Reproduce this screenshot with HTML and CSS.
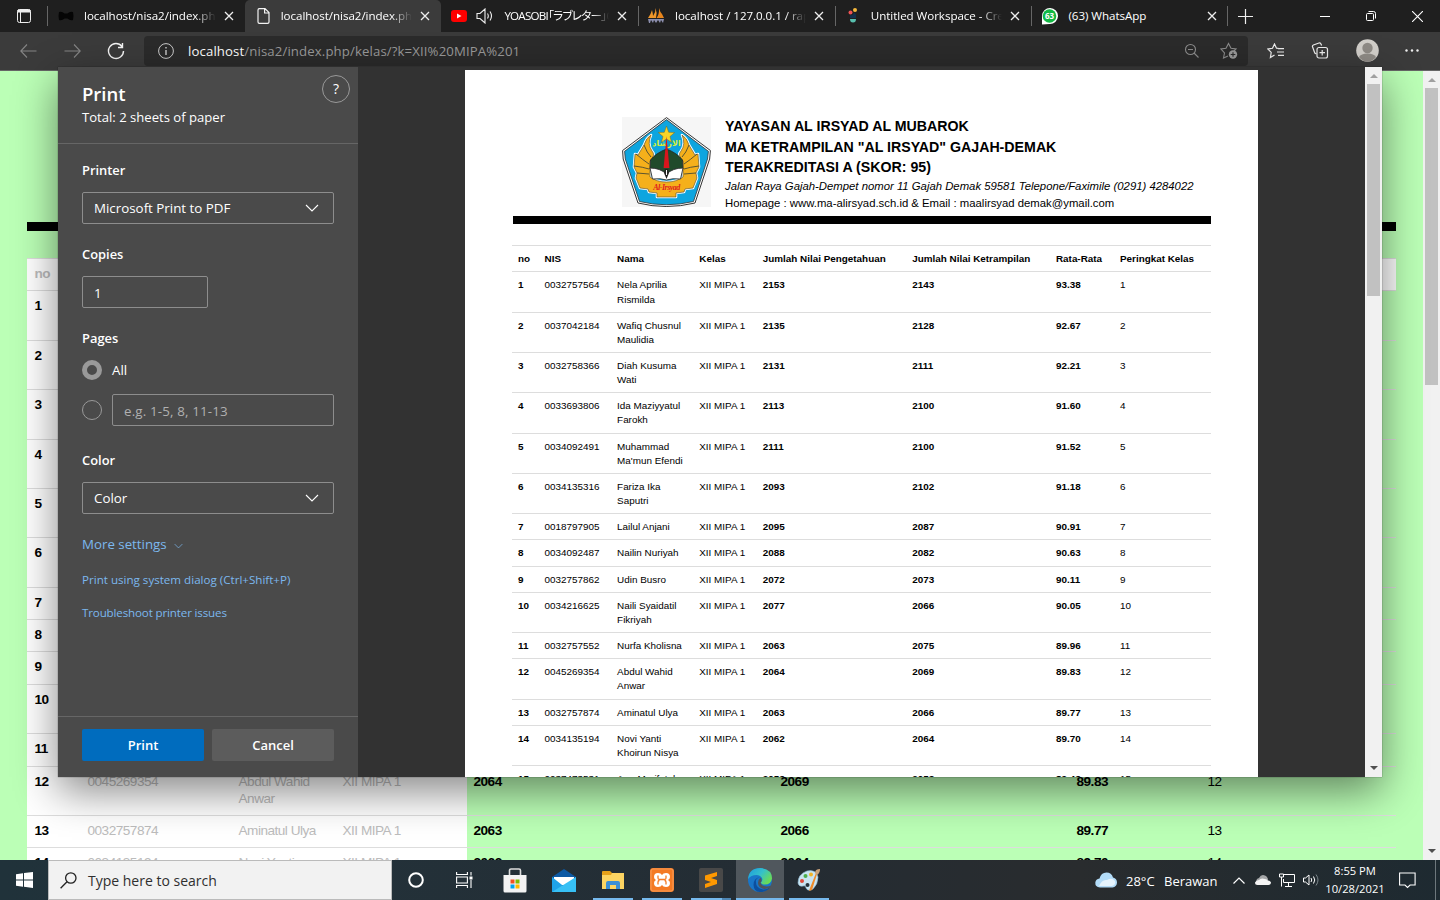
FILE: index.html
```html
<!DOCTYPE html>
<html lang="en">
<head>
<meta charset="utf-8">
<title>localhost/nisa2/index.php/kelas</title>
<link rel="stylesheet" href="styles.css">
</head>
<body>
<svg class="defs" width="0" height="0">
  <symbol id="x" viewBox="0 0 10 10"><path d="M1 1l8 8M9 1l-8 8" fill="none" stroke="#eee" stroke-width="1.3"/></symbol>
  <symbol id="chev" viewBox="0 0 14 8"><path d="M1 1l6 6 6-6" fill="none" stroke="currentColor" stroke-width="1.1"/></symbol>
  <symbol id="up" viewBox="0 0 8 4"><path d="M0 4l4-4 4 4z" fill="currentColor"/></symbol>
  <symbol id="down" viewBox="0 0 8 4"><path d="M0 0l4 4 4-4z" fill="currentColor"/></symbol>
</svg>

<header class="tabs">
  <div class="tab-menu"><svg width="16" height="16" viewBox="0 0 16 16" fill="none" stroke="#eee"><rect x="1.5" y="1.5" width="13" height="13" rx="2"/><path d="M2 2h12v2H2z" fill="#eee"/><path d="M4.5 4v10"/></svg></div>
  <div class="tab">
    <svg width="16" height="16" viewBox="0 0 16 16"><path d="M1 4q3-1 5.500 1.500h3Q12 3 15 4q1 4 0 8-3 1-5.500-1.500h-3Q4 13 1 12q-1-4 0-8z" fill="#050505"/></svg>
    <span class="label">localhost/nisa2/index.php</span><svg class="x"><use href="#x"/></svg>
  </div>
  <div class="tab active">
    <svg width="16" height="16" viewBox="0 0 16 16" fill="none" stroke="#f2f2f2" stroke-width="1.200"><path d="M3.500.6H10l4 4V14q0 1.400-1.400 1.400H4.400Q3 15.400 3 14V2Q3 .6 4.400.6M9.600.6V5H14"/></svg>
    <span class="label">localhost/nisa2/index.php</span><svg class="x"><use href="#x"/></svg>
  </div>
  <div class="tab">
    <svg width="16" height="16" viewBox="0 0 16 16"><rect y="2" width="16" height="12" rx="3" fill="#f00"/><path d="M6 5.500v5L10.500 8z" fill="#fff"/></svg>
    <svg class="speaker" width="18" height="16" viewBox="0 0 18 16" fill="none" stroke="#eee" stroke-width="1.100"><path d="M1 5.500h3L9 1v14l-5-4.500H1zM11.500 5.500q1.600 2.500 0 5M14 3.500q3 4.500 0 9"/></svg>
    <span class="label jp">YOASOBI「ラブレター」Off</span><svg class="x"><use href="#x"/></svg>
  </div>
  <div class="tab sep">
    <svg width="17" height="16" viewBox="0 0 17 16"><path d="M7.500 0q2 5 .5 10H0Q3 6 4 2q1 4 1 6Q8 4 7.500 0z" fill="#f0972a"/><path d="M11 0q1 4 3 6 1 2 2 4H8.500q3-4 2.500-10z" fill="#e8851c"/><path d="M0 11h16l-1 4-2-3-1 3-2-3-2 3-2-3-1 3-2-3-1 3H1z" fill="#8c8fae"/></svg>
    <span class="label">localhost / 127.0.0.1 / rapor</span><svg class="x"><use href="#x"/></svg>
  </div>
  <div class="tab sep">
    <svg width="16" height="16" viewBox="0 0 16 16"><circle cx="10" cy="2" r="2" fill="#f6b93b"/><circle cx="5.500" cy="4.500" r="2" fill="#ee5253"/><path d="M5 7q3 1 4-2 2 0 2 3v2H5z" fill="#12304e"/><path d="M5 11h6q0 3.500-3 3.500T5 11z" fill="#58bfae"/></svg>
    <span class="label">Untitled Workspace - Create</span><svg class="x"><use href="#x"/></svg>
  </div>
  <div class="tab sep last">
    <svg width="17" height="17" viewBox="0 0 17 17"><path d="M1 16.500V8a8 8 0 1 1 7.500 8z" fill="#fff"/><circle cx="8.500" cy="8" r="6.800" fill="#12b944"/><text x="8.500" y="11.200" class="badge-63">63</text></svg>
    <span class="label">(63) WhatsApp</span><svg class="x"><use href="#x"/></svg>
  </div>
  <svg class="plus" width="15" height="15" viewBox="0 0 15 15"><path d="M7.500 0v15M0 7.500h15" stroke="#eee" stroke-width="1.200"/></svg>
  <div class="window-buttons">
    <svg width="10" height="10" viewBox="0 0 10 10"><path d="M0 5.500h10" stroke="#fff"/></svg>
    <svg width="10" height="10" viewBox="0 0 10 10" fill="none" stroke="#fff"><rect x=".5" y="2.500" width="7" height="7" rx="1"/><path d="M2.500.5h5q2 0 2 2v5"/></svg>
    <svg width="11" height="11" viewBox="0 0 10 10"><path d="M0 0l10 10M10 0L0 10" stroke="#fff"/></svg>
  </div>
</header>

<nav class="toolbar">
  <svg class="nav-back" width="17" height="14" viewBox="0 0 17 14" fill="none" stroke="#858585" stroke-width="1.100"><path d="M7 .5L.8 7 7 13.500M1 7h15.500"/></svg>
  <svg class="nav-fwd" width="17" height="14" viewBox="0 0 17 14" fill="none" stroke="#858585" stroke-width="1.100"><path d="M10 .5L16.200 7 10 13.500M16 7H.5"/></svg>
  <svg class="nav-reload" width="18" height="18" viewBox="0 0 18 18" fill="none" stroke="#f4f4f4" stroke-width="1.400"><path d="M15 4.500A7.500 7.500 0 1 0 16.500 9M15.500 1v4.500H11"/></svg>
  <div class="address">
    <svg width="16" height="16" viewBox="0 0 16 16" fill="none" stroke="#ccc"><circle cx="8" cy="8" r="7.400"/><path d="M8 7v5M8 4v1.500" stroke-width="1.400"/></svg>
    <span class="url"><b>localhost</b>/nisa2/index.php/kelas/?k=XII%20MIPA%201</span>
    <svg width="16" height="16" viewBox="0 0 16 16" fill="none" stroke="#8c8c8c" stroke-width="1.100"><circle cx="6.500" cy="6.500" r="5"/><path d="M10 10l4.500 4.500M4 6.500h5"/></svg>
    <svg width="18" height="17" viewBox="0 0 18 17" fill="none" stroke="#8c8c8c" stroke-width="1.100"><path d="M8 14l-4.500 2 1-5L1 7l5-.7L8.500 1.500 11 6.300l5 .7-2 2"/><circle cx="13" cy="12.500" r="4.200" fill="#9a9a9a" stroke="none"/><path d="M13 10.200v4.600M10.700 12.500h4.600" stroke="#2b2b2b"/></svg>
  </div>
  <div class="tools">
    <svg width="18" height="16" viewBox="0 0 18 16" fill="none" stroke="#eee" stroke-width="1.200"><path d="M12 5.500L9.500 5.200 7.500 1 5.500 5.300.8 6l3.400 3.400-.8 5.200L7.500 12M11 5.700h6M10 9h7M11 12.300h6"/></svg>
    <svg width="18" height="17" viewBox="0 0 18 17" fill="none" stroke="#eee" stroke-width="1.200"><rect x="6" y="5.500" width="10.500" height="10.500" rx="2"/><path d="M11.200 8v5.500M8.500 10.700H14M5.500 12L3.800 11 1.600 5Q1 3.600 2.400 3l5.600-2q1.500-.5 2 1l.6 1.500"/></svg>
    <svg width="23" height="23" viewBox="0 0 23 23"><circle cx="11.500" cy="11.500" r="11.300" fill="#d2cfca"/><circle cx="11.500" cy="9" r="5.200" fill="#8f8b86"/><path d="M3 18q2-3.500 8.500-3.500T20 18q-3.500 4.800-8.500 4.800T3 18z" fill="#8f8b86"/></svg>
    <svg width="14" height="3" viewBox="0 0 14 3" fill="#eee"><circle cx="1.500" cy="1.500" r="1.200"/><circle cx="7" cy="1.500" r="1.200"/><circle cx="12.500" cy="1.500" r="1.200"/></svg>
  </div>
</nav>

<main class="page">
  <div class="content">
    <div class="rule"></div>
    <div class="rank">
      <div class="r head"><b>no</b></div>
      <div class="r h50"><b>1</b></div>
      <div class="r h49"><b>2</b></div>
      <div class="r h50"><b>3</b></div>
      <div class="r h49"><b>4</b></div>
      <div class="r h49"><b>5</b></div>
      <div class="r h50"><b>6</b></div>
      <div class="r"><b>7</b></div>
      <div class="r"><b>8</b></div>
      <div class="r h33"><b>9</b></div>
      <div class="r h49"><b>10</b></div>
      <div class="r h33"><b>11</b></div>
      <div class="r h49"><b>12</b><i>0045269354</i><i>Abdul Wahid<br>Anwar</i><i>XII MIPA 1</i><b>2064</b><b>2069</b><b>89.83</b><span>12</span></div>
      <div class="r"><b>13</b><i>0032757874</i><i>Aminatul Ulya</i><i>XII MIPA 1</i><b>2063</b><b>2066</b><b>89.77</b><span>13</span></div>
      <div class="r h49"><b>14</b><i>0034135194</i><i>Novi Yanti</i><i>XII MIPA 1</i><b>2062</b><b>2064</b><b>89.70</b><span>14</span></div>
    </div>
  </div>
  <div class="scroll page-scroll"><svg class="a light"><use href="#up"/></svg><div class="thumb"></div><svg class="a"><use href="#down"/></svg></div>
</main>

<section class="dialog">
  <aside class="settings">
    <div class="title">
      <div><h1>Print</h1><p>Total: 2 sheets of paper</p></div>
      <div class="help">?</div>
    </div>
    <div class="form">
      <h2>Printer</h2>
      <div class="field select"><span>Microsoft Print to PDF</span><svg width="14" height="8"><use href="#chev"/></svg></div>
      <h2 class="mt">Copies</h2>
      <div class="field copies"><span>1</span></div>
      <h2 class="mt">Pages</h2>
      <div class="radio-row"><div class="radio on"></div><span>All</span></div>
      <div class="radio-row range"><div class="radio"></div><div class="field hint"><span>e.g. 1-5, 8, 11-13</span></div></div>
      <h2 class="mt color-title">Color</h2>
      <div class="field select"><span>Color</span><svg width="14" height="8"><use href="#chev"/></svg></div>
      <div class="more"><span>More settings</span><svg width="9" height="6" viewBox="0 0 14 8"><use href="#chev"/></svg></div>
      <div class="link">Print using system dialog (Ctrl+Shift+P)</div>
      <div class="link second">Troubleshoot printer issues</div>
    </div>
    <div class="actions"><div class="btn primary">Print</div><div class="btn">Cancel</div></div>
  </aside>
  <div class="preview">
    <article class="paper">
      <div class="letterhead">
        <svg class="crest" width="89" height="90" viewBox="0 0 89 90">
          <rect width="89" height="90" fill="#f6f6f6"/>
          <path d="M44.500.6L88.400 33.500 87.600 42 73 86Q44 93 16 86L1.200 42 .6 33.500z" fill="#fff" stroke="#333" stroke-width="1"/>
          <path d="M44.500 2.600L86.400 34.300 85.500 42 71.500 84.500Q44 91 17.500 84.500L3.300 42 2.600 34.300z" fill="#0ea5df" stroke="#333" stroke-width=".8"/>
          <path d="M29 18Q24 21 22 28l-6 10-3-1-1 13 3 6-1 5 4 10 8 1 1 3 8 1v4h19v-4l8-1 1-3 8-1 4-10-1-5 3-6-1-13-3 1-6-10q-2-7-7-10 4 9-1 16-4 4 2 10v16q-7 5-16.500 5T28 60V44q6-6 2-10-5-7-1-16z" fill="#f5b01b" stroke="#fff" stroke-width="2.600" stroke-linejoin="round"/>
          <path d="M29 18Q24 21 22 28l-6 10-3-1-1 13 3 6-1 5 4 10 8 1 1 3 8 1v4h19v-4l8-1 1-3 8-1 4-10-1-5 3-6-1-13-3 1-6-10q-2-7-7-10 4 9-1 16-4 4 2 10v16q-7 5-16.500 5T28 60V44q6-6 2-10-5-7-1-16z" fill="#f5b01b" stroke="#4b4a31" stroke-width=".6"/>
          <path d="M22 28q3 8 7 12M14 37q7 6 13 10M12 49q9 1 15 3M15 56l12 1M67 28q-3 8-7 12M75 37q-7 6-13 10M77 49q-9 1-15 3M74 56l-12 1" stroke="#4b4a31" stroke-width=".9" fill="none"/>
          <path d="M44.500 9l2.200 6.300 6 .2-4.700 4 1.700 6-5.200-3.500-5.200 3.500 1.700-6-4.700-4 6-.2z" fill="#f8d427" stroke="#7a6a20" stroke-width=".5"/>
          <text x="44.500" y="28.500" class="arabic">الارشاد</text>
          <path d="M44.500 32Q34 36 28.500 43l-.5 9q9-2 16.500 6Q52 50 61 52l-.5-9Q55 36 44.500 32z" fill="#204a2b" stroke="#222" stroke-width=".8"/>
          <path d="M28 51q10 0 16.500 6Q51 51 61 51l-2.500 11q-8-1-14 1-6-2-14-1z" fill="#fff" stroke="#333" stroke-width=".9"/>
          <path d="M44.500 19l2.900 32h-5.800z" fill="#d9161d"/>
          <path d="M43 52h3l1 4-2.500 6L42 56z" fill="#222"/><path d="M44.500 53v5" stroke="#fff"/>
          <text x="44.500" y="73" class="crest-name">Al-Irsyad</text>
        </svg>
        <div class="lines">
          <h3>YAYASAN AL IRSYAD AL MUBAROK</h3>
          <h3 class="l2">MA KETRAMPILAN "AL IRSYAD" GAJAH-DEMAK</h3>
          <h3 class="l3">TERAKREDITASI A (SKOR: 95)</h3>
          <p class="addr">Jalan Raya Gajah-Dempet nomor 11 Gajah Demak 59581 Telepone/Faximile (0291) 4284022</p>
          <p class="home">Homepage : www.ma-alirsyad.sch.id &amp; Email : maalirsyad demak@ymail.com</p>
        </div>
      </div>
      <div class="bar"></div>
      <div class="sheet">
        <div class="row th"><b>no</b><b>NIS</b><b>Nama</b><b>Kelas</b><b>Jumlah Nilai Pengetahuan</b><b>Jumlah Nilai Ketrampilan</b><b>Rata-Rata</b><b>Peringkat Kelas</b></div>
        <div class="row two"><b>1</b><span>0032757564</span><span>Nela Aprilia<br>Rismilda</span><span>XII MIPA 1</span><b>2153</b><b>2143</b><b>93.38</b><span>1</span></div>
        <div class="row two"><b>2</b><span>0037042184</span><span>Wafiq Chusnul<br>Maulidia</span><span>XII MIPA 1</span><b>2135</b><b>2128</b><b>92.67</b><span>2</span></div>
        <div class="row two"><b>3</b><span>0032758366</span><span>Diah Kusuma<br>Wati</span><span>XII MIPA 1</span><b>2131</b><b>2111</b><b>92.21</b><span>3</span></div>
        <div class="row two"><b>4</b><span>0033693806</span><span>Ida Maziyyatul<br>Farokh</span><span>XII MIPA 1</span><b>2113</b><b>2100</b><b>91.60</b><span>4</span></div>
        <div class="row two"><b>5</b><span>0034092491</span><span>Muhammad<br>Ma'mun Efendi</span><span>XII MIPA 1</span><b>2111</b><b>2100</b><b>91.52</b><span>5</span></div>
        <div class="row two"><b>6</b><span>0034135316</span><span>Fariza Ika<br>Saputri</span><span>XII MIPA 1</span><b>2093</b><b>2102</b><b>91.18</b><span>6</span></div>
        <div class="row"><b>7</b><span>0018797905</span><span>Lailul Anjani</span><span>XII MIPA 1</span><b>2095</b><b>2087</b><b>90.91</b><span>7</span></div>
        <div class="row"><b>8</b><span>0034092487</span><span>Nailin Nuriyah</span><span>XII MIPA 1</span><b>2088</b><b>2082</b><b>90.63</b><span>8</span></div>
        <div class="row"><b>9</b><span>0032757862</span><span>Udin Busro</span><span>XII MIPA 1</span><b>2072</b><b>2073</b><b>90.11</b><span>9</span></div>
        <div class="row two"><b>10</b><span>0034216625</span><span>Naili Syaidatil<br>Fikriyah</span><span>XII MIPA 1</span><b>2077</b><b>2066</b><b>90.05</b><span>10</span></div>
        <div class="row"><b>11</b><span>0032757552</span><span>Nurfa Kholisna</span><span>XII MIPA 1</span><b>2063</b><b>2075</b><b>89.96</b><span>11</span></div>
        <div class="row two"><b>12</b><span>0045269354</span><span>Abdul Wahid<br>Anwar</span><span>XII MIPA 1</span><b>2064</b><b>2069</b><b>89.83</b><span>12</span></div>
        <div class="row"><b>13</b><span>0032757874</span><span>Aminatul Ulya</span><span>XII MIPA 1</span><b>2063</b><b>2066</b><b>89.77</b><span>13</span></div>
        <div class="row two"><b>14</b><span>0034135194</span><span>Novi Yanti<br>Khoirun Nisya</span><span>XII MIPA 1</span><b>2062</b><b>2064</b><b>89.70</b><span>14</span></div>
        <div class="row"><b>15</b><span>0037473531</span><span>Ana Marifatul</span><span>XII MIPA 1</span><b>2053</b><b>2053</b><b>89.43</b><span>15</span></div>
      </div>
    </article>
  </div>
  <div class="scroll preview-scroll"><svg class="a light"><use href="#up"/></svg><div class="thumb"></div><svg class="a"><use href="#down"/></svg></div>
</section>

<footer class="taskbar">
  <div class="start"><svg width="17" height="16" viewBox="0 0 17 16" fill="#fff"><path d="M0 2.300l7-1v6.200H0zM8 1.100L17 0v7.500H8zM0 8.500h7v6.200l-7-1zM8 8.500h9V16l-9-1.200z"/></svg></div>
  <div class="search"><svg width="17" height="17" viewBox="0 0 17 17" fill="none" stroke="#222" stroke-width="1.300"><circle cx="10.800" cy="6" r="5.200"/><path d="M7 9.800L.6 16.300"/></svg><span>Type here to search</span></div>
  <div class="cell"><svg width="18" height="18" viewBox="0 0 18 18"><circle cx="9" cy="9" r="6.800" fill="none" stroke="#fff" stroke-width="2"/></svg></div>
  <div class="cell view"><svg width="17" height="16" viewBox="0 0 17 16" fill="none" stroke="#fff" stroke-width="1.100"><path d="M.6 0v2.500h10.800V0M.6 16v-2.500h10.800V16M.6 5h10.800v6H.6zM15 0v3.500M15 8v8"/><path d="M13.500 4.500h3v3h-3z" fill="#fff" stroke="none"/></svg></div>
  <div class="cell app"><svg width="24" height="25" viewBox="0 0 24 25"><path d="M6.500 8V2.500q0-1.500 1.500-1.500h8q1.500 0 1.500 1.500V8" fill="none" stroke="#ddd" stroke-width="1.600"/><path d="M.5 7h23v16q0 1.500-1.500 1.500H2Q.5 24.500.5 23z" fill="#f3f3f3"/><path d="M7.500 11.500h4v4h-4z" fill="#f25022"/><path d="M12.500 11.500h4v4h-4z" fill="#7fba00"/><path d="M7.500 16.500h4v4h-4z" fill="#00a4ef"/><path d="M12.500 16.500h4v4h-4z" fill="#ffb900"/></svg></div>
  <div class="cell app"><svg width="24" height="23" viewBox="0 0 24 23"><path d="M0 8l12-8 12 8v3H0z" fill="#0c59a4"/><path d="M2 8h20v8H2z" fill="#fff"/><path d="M0 8l12 9.500L24 8v15H0z" fill="#1fa3ea"/><path d="M0 23L24 8v15z" fill="#37c0f5"/></svg></div>
  <div class="cell app run"><svg width="22" height="19" viewBox="0 0 22 19"><path d="M0 1q0-1 1-1h7l2 2h11q1 0 1 1v15H0z" fill="#e6a11a"/><path d="M0 4h9l1-2h12v16H0z" fill="#fcd462"/><path d="M4 18v-6q0-2 2-2h10q2 0 2 2v6h-4v-4H8v4z" fill="#3a8fd6"/></svg></div>
  <div class="cell app run"><svg width="24" height="24" viewBox="0 0 24 24"><rect width="24" height="24" rx="3" fill="#f47a24"/><rect x="1" y="1" width="22" height="22" rx="2" fill="none" stroke="#f9a566" stroke-width=".8"/><path d="M8 5q3 0 4 2 1-2 4-2 4 0 4 4 0 2-2 3 2 1 2 3 0 4-4 4-3 0-4-2-1 2-4 2-4 0-4-4 0-2 2-3-2-1-2-3 0-4 4-4z" fill="#fff"/><path d="M8 7.500v2.500q0 1.500 1.500 1.500h5q1.500 0 1.500-1.500V7.500M8 16.500V14q0-1.500 1.500-1.500M16 16.500V14q0-1.500-1.500-1.500" fill="none" stroke="#f47a24" stroke-width="1.300"/></svg></div>
  <div class="cell app run multi"><svg width="24" height="24" viewBox="0 0 24 24"><rect width="24" height="24" rx="2" fill="#484848"/><path d="M6 7.500L18 4v4l-6 2 6 2v4L6 20v-4l6-2-6-2z" fill="#ff9800"/></svg></div>
  <div class="cell app run focus"><svg width="24" height="24" viewBox="0 0 24 24"><defs><linearGradient id="eg" x1="0" x2="1" y1="0" y2=".6"><stop offset="0" stop-color="#1c9be0"/><stop offset=".55" stop-color="#35c1c9"/><stop offset="1" stop-color="#6bdc54"/></linearGradient></defs><circle cx="12" cy="12" r="12" fill="#1976c8"/><path d="M0 11Q1 0 12.500 0 24 1 24 10.500q-1 6-7 6-4 0-4-2 2-2 1-4.500Q12 7 8.500 7 3 7 0 11z" fill="url(#eg)"/><path d="M8 12q-1 8 7 9.500 4 .5 7.500-3Q19 24 12 24 6 24 5.500 17 5.500 10 12 9q-3 1-4 3z" fill="#0d4f9e"/><path d="M12.500 14.500q1 4 6 4 3 0 4.500-1l-1 1.800q-3 2-7 1.500-5-1.500-5-6 0-3 2.500-5 2 3 0 4.700z" fill="#52545a"/></svg></div>
  <div class="cell app run"><svg width="24" height="24" viewBox="0 0 24 24"><path d="M1 15Q1 6 10 3q9-2 11 6 0 7-5 12-5 3-7-1 0-3-3-2-4 1-5-3z" fill="#c9e4f2" stroke="#89b8d4" stroke-width=".6"/><circle cx="5" cy="13" r="2" fill="#e04a3a"/><circle cx="8.500" cy="8" r="2" fill="#4cae4c"/><circle cx="14" cy="6.500" r="2" fill="#f0b429"/><circle cx="10.500" cy="17" r="2" fill="#27323a"/><path d="M20 6l-5 16-3 1 1-3 6-15z" fill="#ee8b2b"/><path d="M18 5q0-4 5-4 0 4-3 6z" fill="#c9a27a"/></svg></div>
  <div class="tray">
    <svg class="cloud" width="22" height="16" viewBox="0 0 22 16"><path d="M5 15.500Q0 15 .3 10.500.8 7 4.500 6.500 6 .5 11.500.5q5 0 6.500 5 4 1 4 5.200-.5 4.300-4.500 4.800z" fill="#b3dcf8"/><path d="M4 14q3-7 8-6 5-3 8 1 1 4-3 5z" fill="#e6f4fd"/></svg>
    <span class="temp">28°C</span><span class="cond">Berawan</span>
    <svg class="caret" width="12" height="7" viewBox="0 0 12 7"><path d="M.5 6.500L6 1l5.500 5.500" fill="none" stroke="#fff" stroke-width="1.200"/></svg>
    <svg class="drive" width="16" height="10" viewBox="0 0 16 10"><path d="M2 8Q0 4 4 3q2-4 6-2.500Q13 2 13 5z" fill="#a5a7a8"/><path d="M2.500 10Q0 10 0 7.500 1 5 4 5q2-2.500 6-1 2 0 3 1.500 3 .5 3 2.500-.5 2-2.500 2z" fill="#f4f4f4"/></svg>
    <svg class="net" width="16" height="14" viewBox="0 0 16 14" fill="none" stroke="#fff"><path d="M5 1.500h10.500v8h-11V6M9.500 10v3M6 13.500h7M.5 1h4v3h-4zM2.500 4v9.500"/></svg>
    <svg class="vol" width="16" height="14" viewBox="0 0 16 14" fill="none" stroke="#fff"><path d="M.5 5h2L6 2v10L2.500 9h-2zM8 5q1.500 2 0 4M10.500 3.500q2.500 3.500 0 7"/><path d="M13 1.500q4 5.500 0 11" stroke="#7c868b"/></svg>
    <div class="clock"><span>8:55 PM</span><span>10/28/2021</span></div>
    <svg class="note" width="17" height="17" viewBox="0 0 17 17" fill="none" stroke="#fff" stroke-width="1.100"><path d="M.6 1h15.500v12h-5L8.500 15.500 6 13H.6z"/></svg>
    <div class="peek"></div>
  </div>
</footer>
</body>
</html>
```

FILE: styles.css
```css
* { box-sizing: border-box; }
body { margin: 0; width: 1440px; height: 900px; overflow: hidden; position: relative; display: flex; flex-direction: column; font-family: "Open Sans", "Noto Sans", sans-serif; color: #fff; background: #3b3b3b; }
h1, h2, h3, p { margin: 0; }
svg { flex: none; display: block; }
.defs { position: absolute; }

/* Tab strip */
.tabs { height: 32px; flex: none; display: flex; align-items: center; background: #1f1f1f; }
.tab-menu { width: 48px; height: 20px; padding: 2px 0 0 16px; border-right: 1px solid #666; }
.tab { width: 196.700px; height: 32px; display: flex; align-items: center; padding: 0 11px 0 10px; font-size: 11.600px; position: relative; }
.tab.active { background: #3b3b3b; border-radius: 5px 5px 0 0; }
.tab.sep { background: linear-gradient(#666, #666) 0 6px / 1px 20px no-repeat; }
.tab.last { background: linear-gradient(#666, #666) 0 6px / 1px 20px no-repeat, linear-gradient(#666, #666) 100% 6px / 1px 20px no-repeat; }
.tab .label { flex: 1; width: 0; margin: 0 8px 0 10px; overflow: hidden; white-space: nowrap; line-height: 18px; letter-spacing: -.05px; -webkit-mask-image: linear-gradient(90deg, #000 84%, transparent); mask-image: linear-gradient(90deg, #000 84%, transparent); }
.tab .label.jp { font-family: "Open Sans", "Noto Sans CJK JP", sans-serif; font-feature-settings: "palt"; letter-spacing: -.75px; }
.tab.last .label { mask-image: none; -webkit-mask-image: none; }
.x { width: 10px; height: 10px; }
.speaker { margin-left: 9px; }
.badge-63 { font: bold 8px "Open Sans", sans-serif; fill: #fff; text-anchor: middle; }
.plus { margin-left: 10px; }
.window-buttons { flex: 1; display: flex; justify-content: flex-end; align-items: center; gap: 36px; padding-right: 17px; }

/* Toolbar */
.toolbar { height: 39px; flex: none; display: flex; align-items: center; padding: 0 28px 1px 20px; background: #3b3b3b; border-bottom: 1px solid #666; }
.nav-fwd { margin-left: 27px; }
.nav-reload { margin-left: 26px; }
.address { width: 1104px; height: 30px; margin: 0 0 0 19px; padding: 0 10px 0 14px; display: flex; align-items: center; background: #2b2b2b; border-radius: 4px; }
.url { flex: 1; margin-left: 14px; font-size: 13.200px; letter-spacing: .12px; color: #9a9a9a; }
.url b { font-weight: 400; color: #fff; }
.address svg:last-child { margin-left: 20px; }
.tools { flex: 1; display: flex; align-items: center; justify-content: space-between; padding-left: 19px; margin-right: -7px; }

/* Web page behind the dialog */
.page { flex: 1; min-height: 0; display: flex; background: #bbffb6; overflow: hidden; }
.content { flex: 1; padding: 151px 27px 0; }
.rule { height: 9px; background: #000; }
.rank { margin-top: 27px; font: 13.600px/17px "Liberation Sans", Arial, sans-serif; letter-spacing: -.5px; color: #000; background: linear-gradient(#fff, #fff) 0 0 / 440px 100% no-repeat; }
.r { height: 32px; display: grid; grid-template-columns: 53px 151px 104px 131px 307px 296px 131px 1fr; padding: 6px 0 0 7.500px; border-top: 1px solid #ddd; }
.r i { font-style: normal; color: #bcbcbc; }
.r.head { background: #fff; color: #bcbcbc; }
.r.h33 { height: 33px; }
.r.h49 { height: 49px; }
.r.h50 { height: 50px; }

/* Scrollbars */
.scroll { width: 17px; flex: none; background: #f1f1f1; display: flex; flex-direction: column; align-items: center; padding: 7px 0; color: #505050; }
.a { width: 8px; height: 4px; }
.a.light { color: #a0a0a0; }
.a:last-child { margin-top: auto; }
.thumb { width: 13px; background: #c1c1c1; margin-top: 6px; }
.page-scroll .thumb { height: 297px; }
.preview-scroll .thumb { height: 212px; }

/* Print dialog */
.dialog { position: absolute; left: 58px; top: 67px; width: 1324px; height: 710px; display: flex; background: #323232; box-shadow: 0 0 1px rgba(0,0,0,.6), 0 14px 40px rgba(0,0,0,.48); }
.settings { width: 300px; display: flex; flex-direction: column; background: #4a4a4a; font-size: 13.350px; }
.title { height: 77px; display: flex; justify-content: space-between; padding: 14px 8px 0 24px; border-bottom: 1px solid #666; }
.title h1 { font-size: 18.500px; line-height: 26px; font-weight: 600; }
.title p { font-size: 13.100px; line-height: 20px; }
.help { width: 28px; height: 28px; margin-top: -6px; border: 1px solid #999; border-radius: 50%; text-align: center; font-size: 14px; line-height: 26px; }
.form { flex: 1; padding: 16px 24px 0; }
.form h2 { font-size: 12.900px; line-height: 20px; font-weight: 600; }
.form .mt { margin-top: 20px; }
.field { height: 32px; margin-top: 12px; border: 1px solid #8d8d8d; border-radius: 2px; display: flex; align-items: center; justify-content: space-between; padding: 0 14px 0 11px; }
.field.copies { width: 126px; padding-top: 1px; }
.radio-row { display: flex; align-items: center; height: 20px; gap: 10px; margin-top: 12px; }
.radio-row.range { height: 32px; margin-top: 14px; }
.radio { width: 20px; height: 20px; border: 1px solid #999; border-radius: 50%; }
.radio.on { border: 5px solid #999; }
.radio-row .hint { flex: 1; margin: 0; color: #b0b0b0; padding-top: 2px; letter-spacing: .15px; }
.form .color-title { margin-top: 24px; }
.more { display: flex; align-items: center; height: 20px; margin-top: 20px; color: #7cb8ee; font-size: 13.300px; }
.more svg { margin: 3px 0 0 7px; }
.link { color: #7cb8ee; font-size: 11.600px; line-height: 18px; margin-top: 17px; white-space: nowrap; }
.link.second { margin-top: 15px; letter-spacing: -.15px; }
.actions { height: 61px; border-top: 1px solid #666; display: flex; gap: 8px; padding: 12px 24px 16px; }
.btn { flex: 1; height: 32px; line-height: 32px; text-align: center; font-weight: 600; font-size: 13px; background: #5c5c5c; border-radius: 2px; }
.btn.primary { background: #006cbe; }

/* Paper */
.preview { flex: 1; overflow: hidden; padding: 3px 0 0 107px; }
.paper { width: 793px; height: 1122px; background: #fff; color: #000; padding: 47px 47px 0 47.500px; font-family: "Liberation Sans", Arial, sans-serif; }
.letterhead { display: flex; padding-left: 109.500px; height: 99px; }
.lines { margin-left: 14px; white-space: nowrap; }
.lines h3 { font-size: 14.200px; line-height: 20.500px; height: 20.500px; margin-top: -1px; }
.lines h3.l2, .lines h3.l3 { margin-top: 0; }
.lines p { font-size: 11.330px; line-height: 17px; }
.addr { font-style: italic; }
.bar { height: 8px; background: #000; }
.arabic { font: bold 8px "DejaVu Sans", sans-serif; fill: #d5ef3a; text-anchor: middle; }
.crest-name { font: italic bold 8px "Liberation Serif", serif; fill: #e02020; text-anchor: middle; letter-spacing: -.5px; }
.sheet { margin: 21.300px 0 0 -1px; font-size: 9.900px; line-height: 14.100px; }
.row { height: 26.200px; border-top: 1px solid #ddd; display: grid; grid-template-columns: 26.600px 72.500px 82.200px 63.500px 149.500px 143.700px 64px 1fr; padding: 6px 0 0 6.500px; white-space: nowrap; }
.row.two { height: 40.300px; }

/* Taskbar */
.taskbar { height: 40px; flex: none; display: flex; position: relative; z-index: 2; background: linear-gradient(90deg, #20323a, #233139 25%, #242c33 55%, #292c2e 75%, #1e2a31); }
.start { width: 48px; display: flex; align-items: center; justify-content: center; }
.search { width: 344px; background: #f2f2f2; border: 1px solid #bbb; display: flex; align-items: center; padding-left: 11px; color: #2f2f2f; font-size: 14px; }
.search span { margin: 1px 0 0 11px; }
.cell { width: 48px; height: 40px; display: flex; align-items: center; justify-content: center; }
.cell.view { margin-right: 2px; }
.cell.app { margin-left: 1px; }
.cell.run { background: linear-gradient(#76b9ed, #76b9ed) 50% 100% / 40px 2px no-repeat; }
.cell.multi { background: linear-gradient(90deg, #76b9ed 31px, #4e86b4 31px) 50% 100% / 40px 2px no-repeat; }
.cell.focus { background: linear-gradient(#76b9ed, #76b9ed) 0 100% / 48px 2px no-repeat, #50575d; }
.tray { flex: 1; display: flex; align-items: center; justify-content: flex-end; font-size: 13px; }
.temp { margin: 1px 0 0 9px; width: 29px; }
.cond { margin: 1px 0 0 9px; width: 53px; }
.caret { margin-left: 16px; }
.drive { margin-left: 10px; }
.net { margin-left: 8px; }
.vol { margin-left: 8px; }
.clock { margin-left: 5px; width: 62px; display: flex; flex-direction: column; align-items: center; font-size: 11.200px; line-height: 18px; }
.note { margin-left: 13px; }
.peek { width: 5px; height: 40px; margin-left: 19px; border-left: 1px solid #6d777c; }
```
